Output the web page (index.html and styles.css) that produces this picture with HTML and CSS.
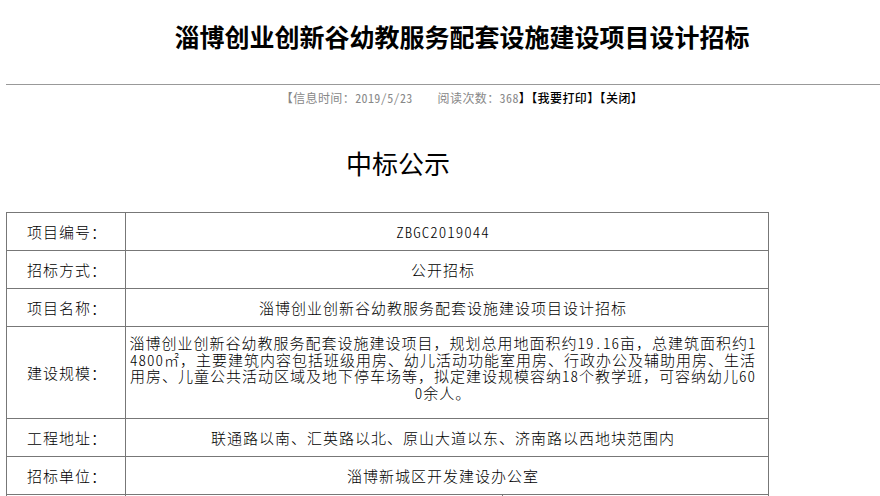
FILE: index.html
```html
<!DOCTYPE html>
<html lang="zh-CN">
<head>
<meta charset="utf-8">
<title>淄博创业创新谷幼教服务配套设施建设项目设计招标</title>
<link rel="stylesheet" href="styles.css">
</head>
<body>
<div class="page">
  <h1 class="title">淄博创业创新谷幼教服务配套设施建设项目设计招标</h1>
  <div class="rule"></div>
  <div class="info">
    <span class="meta">【信息时间：<span class="num">2019/5/23</span>　　阅读次数：<span class="num">368</span></span><a class="act" href="#">】【我要打印】</a><a class="act" href="#">【关闭】</a>
  </div>
  <div class="content">
    <h2 class="heading">中标公示</h2>
    <table class="grid">
      <colgroup><col class="c-label"><col class="c-mid"><col class="c-right"></colgroup>
      <tr class="row"><td class="label">项目编号：</td><td class="value num" colspan="2">ZBGC2019044</td></tr>
      <tr class="row"><td class="label">招标方式：</td><td class="value" colspan="2">公开招标</td></tr>
      <tr class="row"><td class="label">项目名称：</td><td class="value" colspan="2">淄博创业创新谷幼教服务配套设施建设项目设计招标</td></tr>
      <tr class="row-tall"><td class="label">建设规模：</td><td class="value multi" colspan="2">淄博创业创新谷幼教服务配套设施建设项目，规划总用地面积约<span class="num">19.16</span>亩，总建筑面积约<span class="num">14800</span>㎡，主要建筑内容包括班级用房、幼儿活动功能室用房、行政办公及辅助用房、生活用房、儿童公共活动区域及地下停车场等，拟定建设规模容纳<span class="num">18</span>个教学班，可容纳幼儿<span class="num">600</span>余人。</td></tr>
      <tr class="row"><td class="label">工程地址：</td><td class="value" colspan="2">联通路以南、汇英路以北、原山大道以东、济南路以西地块范围内</td></tr>
      <tr class="row"><td class="label">招标单位：</td><td class="value" colspan="2">淄博新城区开发建设办公室</td></tr>
      <tr class="row"><td class="label"></td><td class="value"></td><td class="value"></td></tr>
    </table>
  </div>
</div>
</body>
</html>
```
FILE: styles.css
```css
html, body {
  margin: 0;
  padding: 0;
  overflow: hidden;
  background: #fff;
}
body {
  font-family: "Noto Sans CJK SC", "Noto Sans", sans-serif;
  color: #000;
}
.num {
  font-feature-settings: "hwid" 1;
}
.page {
  width: 912px;
  margin-left: 6px;
}
.title {
  margin: 18px 0 0;
  height: 66px;
  font-size: 25px;
  line-height: 36px;
  font-weight: 700;
  text-align: center;
}
.rule {
  height: 1px;
  background: #999;
}
.info {
  margin-top: 4px;
  font-size: 12px;
  line-height: 17px;
  letter-spacing: 0.4px;
  text-align: center;
}
.meta {
  color: #888;
}
.act {
  color: #000;
  text-decoration: none;
  font-weight: 500;
}
.content {
  width: 784px;
}
.heading {
  margin: 38px 0 0;
  font-size: 26px;
  line-height: 38px;
  font-weight: 400;
  text-align: center;
  height: 68px;
}
.grid {
  margin-top: 0;
  width: 762px;
  border-collapse: collapse;
  table-layout: fixed;
  font-size: 15px;
  letter-spacing: 1px;
  font-weight: 300;
}
.c-label { width: 119px; }
.c-mid { width: 377px; }
.c-right { width: 266px; }
.grid td {
  border: 1px solid #777;
  padding: 0 10px 1px 2px;
  vertical-align: middle;
}
.row { height: 38px; }
.row-tall { height: 92px; }
.grid td.label {
  padding-left: 20px;
  text-align: left;
}
.value {
  text-align: center;
}
.grid td.multi {
  line-height: 16.5px;
  word-break: break-all;
  padding-bottom: 9px;
}
```
